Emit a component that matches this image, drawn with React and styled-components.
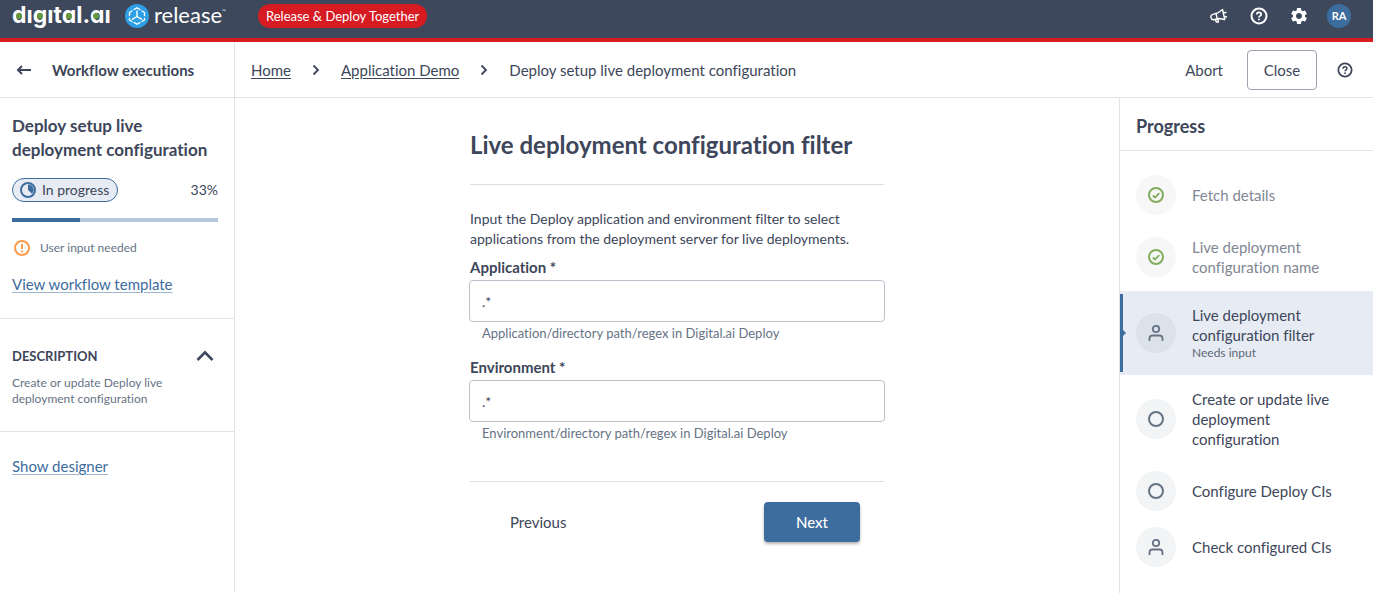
import React, { useState } from "react";
import styled, { createGlobalStyle } from "styled-components";
import { MdSettings } from "react-icons/md";

const GlobalStyle = createGlobalStyle`
  * {
    box-sizing: border-box;
  }
  body {
    margin: 0;
    background-color: #fff;
    color: #3d465a;
    font-family: Lato, sans-serif;
    font-size: 15px;
    font-variant-ligatures: none;
    line-height: 20px;
  }
  button, input {
    font: inherit;
    color: inherit;
  }
`;

const Page = styled.div`
  display: flex;
  flex-direction: column;
  min-height: 100vh;
`;

const TopBar = styled.header`
  display: flex;
  align-items: center;
  justify-content: space-between;
  height: 42px;
  padding: 0 20px 6px 12px;
  background-color: #3d485c;
  border-bottom: 4px solid #d61b23;
  color: #fff;
`;

const BarGroup = styled.div`
  display: flex;
  align-items: center;
`;

const BrandLogo = styled.svg`
  display: block;
  width: 218px;
  height: 32px;
  margin-right: 28px;
`;

const LogoWord = styled.text`
  fill: #fff;
  font-family: Inter, sans-serif;
  font-feature-settings: "cv11";
  font-size: 23px;
  font-weight: 700;
`;

const LogoProduct = styled.text`
  fill: #fff;
  font-family: Lato, sans-serif;
  font-size: ${(props) => (props.$mark ? 5 : 22)}px;
`;

const EnvironmentTag = styled.span`
  height: 24px;
  padding: 0 8px;
  border-radius: 12px;
  background-color: #d61b23;
  font-size: 13px;
  line-height: 24px;
`;

const IconButton = styled.button`
  display: flex;
  align-items: center;
  justify-content: center;
  width: ${(props) => props.$size || 40}px;
  height: ${(props) => props.$size || 32}px;
  padding: 0;
  border: none;
  background: none;
  cursor: pointer;
`;

const Avatar = styled.span`
  width: 24px;
  height: 24px;
  margin: 0 2px 0 8px;
  border-radius: 50%;
  background-color: #3d6c9e;
  font-size: 11px;
  font-weight: 700;
  line-height: 24px;
  text-align: center;
`;

const SubHeader = styled.div`
  display: flex;
  height: 56px;
  border-bottom: 1px solid #e1e3e6;
`;

const BackTitle = styled.div`
  display: flex;
  align-items: center;
  gap: 16px;
  width: 235px;
  padding-left: 12px;
  border-right: 1px solid #e1e3e6;
  font-weight: 700;
`;

const Breadcrumbs = styled.nav`
  display: flex;
  flex: 1;
  align-items: center;
  gap: 20px;
  padding-left: 16px;
`;

const Crumb = styled.a`
  color: inherit;
  text-decoration: underline;
  text-underline-offset: 2px;
`;

const HeaderActions = styled.div`
  display: flex;
  align-items: center;
  padding-right: 16px;
`;

const TextButton = styled.button`
  height: 40px;
  padding: 0 24px;
  border: none;
  background: none;
  cursor: pointer;
`;

const OutlinedButton = styled(TextButton)`
  width: 70px;
  margin-right: 16px;
  padding: 0;
  border: 1px solid #9ba3af;
  border-radius: 4px;
`;

const PrimaryButton = styled(TextButton)`
  width: 96px;
  border-radius: 4px;
  background-color: #3d6c9e;
  box-shadow: 0 2px 3px rgba(0, 0, 0, 0.3);
  color: #fff;
  font-weight: 500;
`;

const Body = styled.div`
  display: flex;
  flex: 1;
`;

const Sidebar = styled.aside`
  width: 235px;
  border-right: 1px solid #e1e3e6;
`;

const SideSection = styled.section`
  padding: ${(props) => (props.$first ? 16 : 24)}px 16px 24px 12px;
  border-bottom: ${(props) => (props.$last ? "none" : "1px solid #e1e3e6")};
`;

const SideTitle = styled.h2`
  margin: 0 0 16px;
  font-size: 17px;
  font-weight: 700;
  line-height: 24px;
`;

const StatusRow = styled.div`
  display: flex;
  align-items: center;
  justify-content: space-between;
  margin-bottom: 16px;
  font-size: 14px;
`;

const StatusChip = styled.span`
  display: flex;
  align-items: center;
  gap: 6px;
  height: 24px;
  padding: 0 8px 0 7px;
  border: 1px solid #3d6c9e;
  border-radius: 12px;
  background-color: #e7ecf4;
`;

const Track = styled.div`
  height: 4px;
  margin-bottom: 16px;
  background-color: #b5c6da;
`;

const TrackFill = styled.div`
  height: 100%;
  background-color: #3d6c9e;
`;

const Notice = styled.div`
  display: flex;
  align-items: center;
  gap: 8px;
  margin-bottom: 16px;
  color: #667385;
  font-size: 12px;
`;

const Link = styled.a`
  color: #3d6c9e;
  text-decoration: underline;
  text-decoration-color: #9fb6cf;
  text-underline-offset: 2px;
`;

const SectionHeader = styled.div`
  display: flex;
  align-items: center;
  justify-content: space-between;
  margin-bottom: 6px;
`;

const SectionTitle = styled.h3`
  margin: 0;
  font-size: 13px;
  font-weight: 700;
  text-transform: uppercase;
`;

const SectionText = styled.p`
  margin: 0;
  color: #667385;
  font-size: 12px;
  line-height: 16px;
`;

const Main = styled.main`
  flex: 1;
  padding: 32px 16px;
`;

const Form = styled.form`
  width: 416px;
  max-width: 100%;
  margin: 0 auto;
`;

const FormTitle = styled.h1`
  margin: 0 1px;
  padding-bottom: 24px;
  border-bottom: 1px solid #dcdee1;
  font-size: 24px;
  font-weight: 700;
  line-height: 30px;
`;

const Intro = styled.p`
  margin: 24px 1px 8px;
  font-size: 14px;
`;

const Field = styled.div`
  margin-bottom: 14px;
`;

const Label = styled.label`
  display: block;
  margin: 0 1px 3px;
  font-weight: 700;
`;

const TextInput = styled.input`
  display: block;
  width: 100%;
  height: 42px;
  padding: 0 12px;
  border: 1px solid #bdc1cc;
  border-radius: 4px;
  outline: none;
  font-size: 14px;
`;

const Helper = styled.div`
  margin-top: 1px;
  padding-left: 13px;
  color: #667385;
  font-size: 13px;
`;

const FormActions = styled.div`
  display: flex;
  justify-content: space-between;
  margin: 38px 1px 0;
  padding: 20px 24px 0 16px;
  border-top: 1px solid #dcdee1;
`;

const ProgressPanel = styled.aside`
  width: 254px;
  border-left: 1px solid #e1e3e6;
`;

const PanelTitle = styled.h2`
  margin: 0;
  padding: 16px 16px 12px;
  border-bottom: 1px solid #e1e3e6;
  font-size: 18px;
  font-weight: 700;
  line-height: 24px;
`;

const StepList = styled.ol`
  margin: 0;
  padding: 16px 0;
  list-style: none;
`;

const Step = styled.li`
  position: relative;
  display: flex;
  align-items: center;
  gap: 16px;
  min-height: 56px;
  padding: 14px 30px 14px 16px;
  background-color: ${(props) => (props.$active ? "#e7ecf4" : "transparent")};
  color: ${(props) => (props.$done ? "#7f8794" : "inherit")};
`;

const StepMarker = styled.span`
  position: absolute;
  top: 3px;
  bottom: 3px;
  left: 0;
  width: 3px;
  background-color: #3d6c9e;
  &::after {
    content: "";
    position: absolute;
    top: 50%;
    left: 3px;
    margin-top: -3px;
    border: 3px solid transparent;
    border-left-color: #3d6c9e;
    border-right: none;
  }
`;

const StepIcon = styled.span`
  display: flex;
  flex: none;
  align-items: center;
  justify-content: center;
  width: 40px;
  height: 40px;
  margin: -6px 0;
  border-radius: 50%;
  background-color: ${(props) =>
    props.$active ? "#dce2ea" : props.$done ? "#f7f7f8" : "#f2f4f5"};
`;

const StepHint = styled.div`
  color: #5c6779;
  font-size: 12px;
  line-height: 16px;
`;

const Logo = () => (
  <BrandLogo viewBox="0 0 218 32" role="img" aria-label="digital.ai release">
    <LogoWord x="0" y="23">dıgıtal.aı</LogoWord>
    <g fill="#649a3d">
      <circle cx="7" cy="16" r="3" />
      <circle cx="28" cy="16" r="3" />
      <circle cx="57" cy="16" r="3" />
      <circle cx="84" cy="16" r="3" />
    </g>
    <circle cx="125" cy="16" r="12" fill="#2c9fe5" />
    <g fill="none" stroke="#fff" strokeWidth="1.4" strokeLinecap="round" strokeLinejoin="round">
      <path d="M122 9.500 125 7.800l3 1.700M120 11l-2.500 1.500v3M130 11l2.500 1.500v3M117.500 18.500v1.500l2.500 1.500M132.500 18.500v1.500l-2.500 1.500M122 22.500l3 1.700 3-1.700" />
      <path d="M125 11v5.500l-4.500 2.700M125 16.500l4.500 2.700" />
    </g>
    <LogoProduct x="142" y="23">release</LogoProduct>
    <LogoProduct $mark x="210" y="13">™</LogoProduct>
  </BrandLogo>
);

const HelpIcon = ({ size = 18 }) => (
  <svg width={size} height={size} viewBox="0 0 18 18" fill="none" stroke="currentColor">
    <circle cx="9" cy="9" r="7.500" strokeWidth="2" />
    <path d="M6.800 7.500c0-1.300 1-2.100 2.200-2.100s2.200.8 2.200 2c0 1.500-2.200 1.500-2.200 3.100" strokeWidth="1.700" />
    <circle cx="9" cy="12.600" r="1" fill="currentColor" stroke="none" />
  </svg>
);

const MegaphoneIcon = () => (
  <svg width="18" height="18" viewBox="0 0 18 18" fill="none" stroke="currentColor" strokeWidth="1.400" strokeLinejoin="round" strokeLinecap="round">
    <path d="M12.500 2.500 14.800 12.500 9 11.500 4 12.700a2.800 2.800 0 0 1-1.300-5.400L8 5.800z" />
    <path d="M6 6.500 7.300 11.800M5.500 12.500l.8 2.500h2.200l-.6-3M14 5.800l2-.3M14.700 9.500l1.800.5" />
  </svg>
);

const BackIcon = () => (
  <svg width="16" height="16" viewBox="0 0 16 16" fill="none" stroke="currentColor" strokeWidth="2">
    <path d="M15 8H2M6 4 2 8l4 4" />
  </svg>
);

const CrumbChevron = () => (
  <svg width="10" height="12" viewBox="0 0 10 12" fill="none" stroke="currentColor" strokeWidth="1.800">
    <path d="M2.500 1.500 7 6l-4.500 4.500" />
  </svg>
);

const CollapseIcon = () => (
  <svg width="20" height="20" viewBox="0 0 20 20" fill="none" stroke="currentColor" strokeWidth="2.600">
    <path d="M2.500 14 10 6.300l7.500 7.700" />
  </svg>
);

const InProgressIcon = () => (
  <svg width="16" height="16" viewBox="0 0 16 16">
    <circle cx="8" cy="8" r="7" fill="none" stroke="#3d6c9e" strokeWidth="2" />
    <path d="M8 8V2.500a5.500 5.500 0 0 1 4 9.300z" fill="#3d6c9e" />
  </svg>
);

const WarningIcon = () => (
  <svg width="20" height="20" viewBox="0 0 20 20" fill="none" stroke="#fd9b4d" strokeWidth="2">
    <circle cx="10" cy="10" r="7" />
    <path d="M10 6v5M10 12.500v2" />
  </svg>
);

const DoneIcon = () => (
  <svg width="16" height="16" viewBox="0 0 16 16" fill="none" stroke="#82ad5f" strokeWidth="2">
    <circle cx="8" cy="8" r="7" />
    <path d="M4.800 8.300 7 10.400l4.300-4.300" strokeWidth="1.800" />
  </svg>
);

const PendingIcon = () => (
  <svg width="16" height="16" viewBox="0 0 16 16" fill="none" stroke="#667385" strokeWidth="2">
    <circle cx="8" cy="8" r="7" />
  </svg>
);

const UserIcon = () => (
  <svg width="16" height="16" viewBox="0 0 16 16" fill="none" stroke="#667385" strokeWidth="1.800">
    <circle cx="8" cy="4" r="3.200" />
    <path d="M1.500 16v-2.500q0-3 3-3h7q3 0 3 3V16" />
  </svg>
);

const stepIcons = {
  done: DoneIcon,
  pending: PendingIcon,
  user: UserIcon,
};

const steps = [
  { title: "Fetch details", icon: "done" },
  { title: "Live deployment configuration name", icon: "done" },
  { title: "Live deployment configuration filter", icon: "user", hint: "Needs input", active: true },
  { title: "Create or update live deployment configuration", icon: "pending" },
  { title: "Configure Deploy CIs", icon: "pending" },
  { title: "Check configured CIs", icon: "user" },
];

const ProgressStep = ({ step }) => {
  const Icon = stepIcons[step.icon];
  const done = step.icon === "done";
  return (
    <Step $active={step.active} $done={done}>
      {step.active && <StepMarker />}
      <StepIcon $active={step.active} $done={done}>
        <Icon />
      </StepIcon>
      <div>
        {step.title}
        {step.hint && <StepHint>{step.hint}</StepHint>}
      </div>
    </Step>
  );
};

const App = () => {
  const [application, setApplication] = useState(".*");
  const [environment, setEnvironment] = useState(".*");
  const [showDescription, setShowDescription] = useState(true);
  const progress = 33;

  return (
    <Page>
      <GlobalStyle />
      <TopBar>
        <BarGroup>
          <Logo />
          <EnvironmentTag>Release &amp; Deploy Together</EnvironmentTag>
        </BarGroup>
        <BarGroup>
          <IconButton aria-label="Announcements">
            <MegaphoneIcon />
          </IconButton>
          <IconButton aria-label="Help">
            <HelpIcon />
          </IconButton>
          <IconButton aria-label="Settings">
            <MdSettings size={20} />
          </IconButton>
          <Avatar>RA</Avatar>
        </BarGroup>
      </TopBar>
      <SubHeader>
        <BackTitle>
          <IconButton $size={24} aria-label="Back">
            <BackIcon />
          </IconButton>
          Workflow executions
        </BackTitle>
        <Breadcrumbs>
          <Crumb href="#home">Home</Crumb>
          <CrumbChevron />
          <Crumb href="#application">Application Demo</Crumb>
          <CrumbChevron />
          <span>Deploy setup live deployment configuration</span>
        </Breadcrumbs>
        <HeaderActions>
          <TextButton>Abort</TextButton>
          <OutlinedButton>Close</OutlinedButton>
          <IconButton $size={24} aria-label="Page help">
            <HelpIcon size={16} />
          </IconButton>
        </HeaderActions>
      </SubHeader>
      <Body>
        <Sidebar>
          <SideSection $first>
            <SideTitle>Deploy setup live deployment configuration</SideTitle>
            <StatusRow>
              <StatusChip>
                <InProgressIcon />
                In progress
              </StatusChip>
              <span>{progress}%</span>
            </StatusRow>
            <Track>
              <TrackFill style={{ width: `${progress}%` }} />
            </Track>
            <Notice>
              <WarningIcon />
              User input needed
            </Notice>
            <Link href="#template">View workflow template</Link>
          </SideSection>
          <SideSection>
            <SectionHeader>
              <SectionTitle>Description</SectionTitle>
              <IconButton
                $size={26}
                aria-label="Toggle description"
                onClick={() => setShowDescription(!showDescription)}
              >
                <CollapseIcon />
              </IconButton>
            </SectionHeader>
            {showDescription && (
              <SectionText>Create or update Deploy live deployment configuration</SectionText>
            )}
          </SideSection>
          <SideSection $last>
            <Link href="#designer">Show designer</Link>
          </SideSection>
        </Sidebar>
        <Main>
          <Form onSubmit={(e) => e.preventDefault()}>
            <FormTitle>Live deployment configuration filter</FormTitle>
            <Intro>
              Input the Deploy application and environment filter to select applications from the
              deployment server for live deployments.
            </Intro>
            <Field>
              <Label htmlFor="application">Application *</Label>
              <TextInput
                id="application"
                value={application}
                onChange={(e) => setApplication(e.target.value)}
              />
              <Helper>Application/directory path/regex in Digital.ai Deploy</Helper>
            </Field>
            <Field>
              <Label htmlFor="environment">Environment *</Label>
              <TextInput
                id="environment"
                value={environment}
                onChange={(e) => setEnvironment(e.target.value)}
              />
              <Helper>Environment/directory path/regex in Digital.ai Deploy</Helper>
            </Field>
            <FormActions>
              <TextButton type="button">Previous</TextButton>
              <PrimaryButton type="submit">Next</PrimaryButton>
            </FormActions>
          </Form>
        </Main>
        <ProgressPanel>
          <PanelTitle>Progress</PanelTitle>
          <StepList>
            {steps.map((step) => (
              <ProgressStep key={step.title} step={step} />
            ))}
          </StepList>
        </ProgressPanel>
      </Body>
    </Page>
  );
};

export default App;
